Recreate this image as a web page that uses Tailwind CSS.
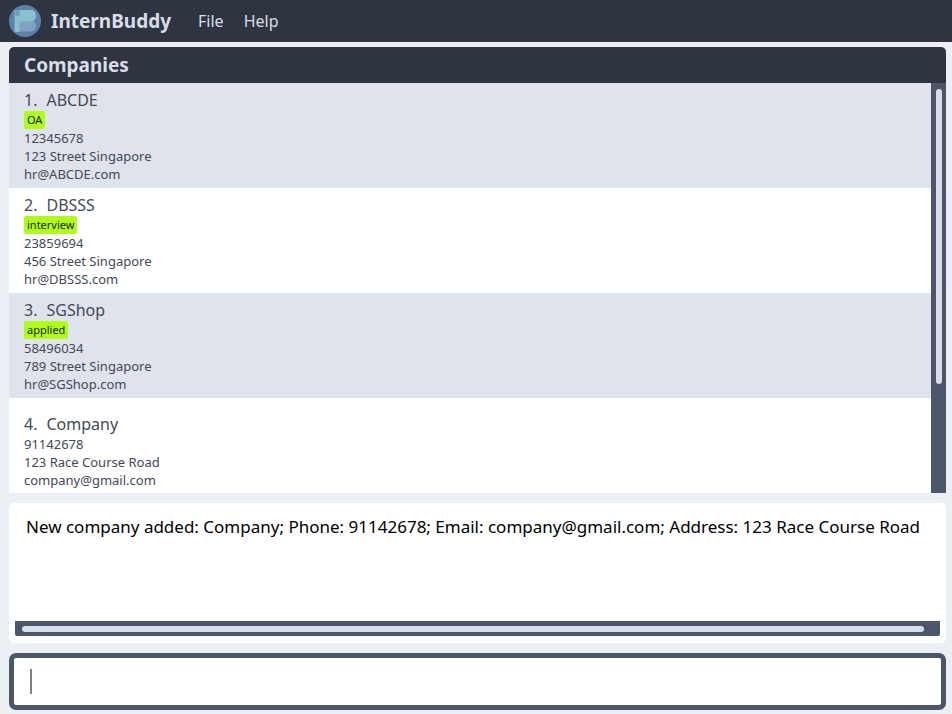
<!DOCTYPE html>
<html lang="en">
<head>
<meta charset="utf-8">
<meta name="viewport" content="width=device-width, initial-scale=1">
<title>InternBuddy</title>
<script src="https://cdn.jsdelivr.net/npm/@tailwindcss/browser@4"></script>
</head>
<body class="flex h-screen flex-col overflow-hidden bg-[#eceff4] font-['Noto_Sans',sans-serif] text-[#434956]">
<header class="flex h-[42px] shrink-0 items-center bg-[#2e3440] pl-[9px] text-[#d8dee9]">
  <svg class="size-8 shrink-0" viewBox="0 0 32 32" aria-hidden="true">
    <circle cx="16" cy="16" r="16" fill="#5e81ac"/>
    <path d="M10 15h11.500a5.500 5.500 0 0 1 5.500 5.500v0.500a5.500 5.500 0 0 1-5.500 5.500H10z" fill="#81a1c1"/>
    <path d="M5.500 5H22a5 5 0 0 1 5 5v1.500a5 5 0 0 1-5 5H10.500V27h-5z" fill="#88c0d0"/>
    <circle cx="8" cy="8" r="3" fill="#6f9fbe"/>
  </svg>
  <h1 class="ml-[10px] text-[19px] font-bold">InternBuddy</h1>
  <nav class="ml-[17px] flex text-base">
    <button type="button" class="px-[10px]">File</button>
    <button type="button" class="px-[10px]">Help</button>
  </nav>
</header>
<main class="flex min-h-0 flex-1 flex-col gap-[10px] pt-[5px] pr-[6px] pb-1 pl-[9px]">
  <section class="flex min-h-0 flex-1 flex-col">
    <h2 class="flex h-9 shrink-0 items-center rounded-t-[5px] bg-[#2e3440] pl-[15px] text-[19px] font-bold text-[#d8dee9]">Companies</h2>
    <div class="flex min-h-0 flex-1">
      <ol class="min-w-0 flex-1 overflow-hidden bg-white text-[13px] leading-[18px]">
        <li class="flex h-[105px] flex-col items-start justify-center bg-[#dfe3ec] pl-[15px]">
          <h3 class="flex gap-[9px] text-base leading-[22px]"><span>1.</span><span>ABCDE</span></h3>
          <span class="rounded-[2px] bg-[#b0fc1b] px-[3px] text-[11px] text-[#20240f]">OA</span>
          <p>12345678</p>
          <p>123 Street Singapore</p>
          <p>hr@ABCDE.com</p>
        </li>
        <li class="flex h-[105px] flex-col items-start justify-center bg-white pl-[15px]">
          <h3 class="flex gap-[9px] text-base leading-[22px]"><span>2.</span><span>DBSSS</span></h3>
          <span class="rounded-[2px] bg-[#b0fc1b] px-[3px] text-[11px] text-[#20240f]">interview</span>
          <p>23859694</p>
          <p>456 Street Singapore</p>
          <p>hr@DBSSS.com</p>
        </li>
        <li class="flex h-[105px] flex-col items-start justify-center bg-[#dfe3ec] pl-[15px]">
          <h3 class="flex gap-[9px] text-base leading-[22px]"><span>3.</span><span>SGShop</span></h3>
          <span class="rounded-[2px] bg-[#b0fc1b] px-[3px] text-[11px] text-[#20240f]">applied</span>
          <p>58496034</p>
          <p>789 Street Singapore</p>
          <p>hr@SGShop.com</p>
        </li>
        <li class="flex h-[105px] flex-col items-start justify-center bg-white pl-[15px]">
          <h3 class="flex gap-[9px] text-base leading-[22px]"><span>4.</span><span>Company</span></h3>
          <p>91142678</p>
          <p>123 Race Course Road</p>
          <p>company@gmail.com</p>
        </li>
      </ol>
      <div class="w-[15px] shrink-0 bg-[#4c566a] px-[5px] pt-[6px] pr-1">
        <div class="h-[73%] rounded-full bg-[#d8dee9]"></div>
      </div>
    </div>
  </section>
  <section class="flex h-[140px] shrink-0 flex-col overflow-hidden rounded-[5px] bg-white px-[6px] pb-[7px]">
    <output class="flex-1 pt-3 pl-[11px] text-[17px] leading-6 whitespace-nowrap text-black">New company added: Company; Phone: 91142678; Email: company@gmail.com; Address: 123 Race Course Road</output>
    <div class="h-[15px] rounded-b-[2px] bg-[#4c566a] py-[5px] pr-4 pl-[7px]">
      <div class="h-[6px] rounded-full bg-[#d8dee9]"></div>
    </div>
  </section>
  <form class="relative h-[57px] shrink-0">
    <input type="text" aria-label="Command" autocomplete="off" class="block size-full rounded-[7px] border-[5px] border-[#4c566a] bg-white px-4 text-[17px] text-black caret-transparent outline-none">
    <span class="absolute top-4 left-[21px] h-[25px] w-[2px] bg-[#808080]"></span>
  </form>
</main>
</body>
</html>
